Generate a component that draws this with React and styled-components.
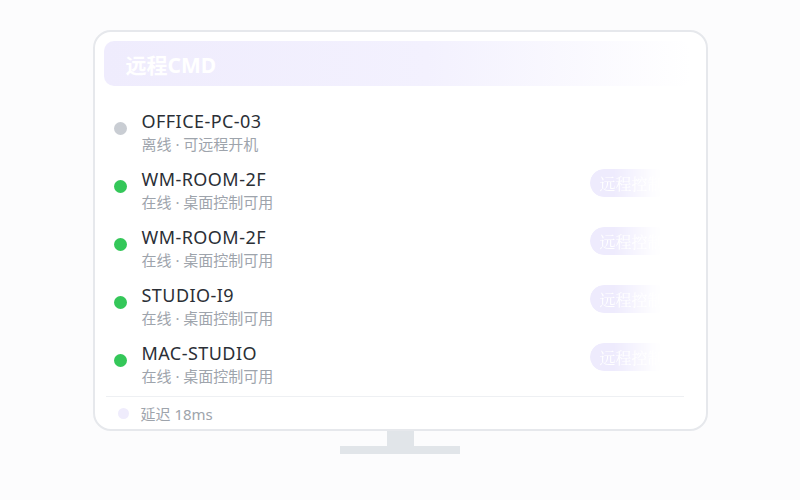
import styled, { createGlobalStyle } from "styled-components";

const GlobalStyle = createGlobalStyle`
  html, body {
    margin: 0;
    padding: 0;
    background: #fcfcfd;
    font-family: "Noto Sans", "Noto Sans CJK SC", sans-serif;
  }
`;

// 页面与显示器外框
const Page = styled.div`
  width: 800px;
  height: 500px;
  padding-top: 30px;
  box-sizing: border-box;
  display: flex;
  flex-direction: column;
  align-items: center;
`;

const Monitor = styled.div`
  width: 615px;
  height: 401px;
  box-sizing: border-box;
  border: 2px solid #e6e8ec;
  border-radius: 18px;
  background: #fff;
  padding: 9px 11px 0 9px;
  display: flex;
  flex-direction: column;
`;

const Neck = styled.div`
  width: 27px;
  height: 15px;
  background: #e1e5e9;
`;

const Base = styled.div`
  width: 120px;
  height: 8px;
  background: #e1e5e9;
`;

const Header = styled.div`
  height: 45px;
  border-radius: 10px;
  background: linear-gradient(90deg, #efecfd 0%, #f3f1fe 55%, #ffffff 100%);
  display: flex;
  align-items: center;
  padding-left: 22px;
  color: #fff;
  font-weight: 700;
  font-size: 21px;
  margin-right: 4px;
`;

const List = styled.div`
  margin-top: 17px;
  display: flex;
  flex-direction: column;
`;

const Row = styled.div`
  height: 58px;
  box-sizing: border-box;
  padding: 6px 25px 6px 10px;
  display: flex;
  align-items: flex-start;
`;

const Dot = styled.span`
  width: ${p => p.$size || 13}px;
  height: ${p => p.$size || 13}px;
  border-radius: 50%;
  flex-shrink: 0;
  background: ${p => p.$color};
  margin-top: ${p => p.$top || 0}px;
`;

const Info = styled.div`
  margin-left: 15px;
  display: flex;
  flex-direction: column;
`;

const Name = styled.div`
  font-size: 18px;
  line-height: 24px;
  color: #2b2f36;
  letter-spacing: 0.45px;
`;

const Sub = styled.div`
  font-size: 15px;
  line-height: 22px;
  color: #9ea4ac;
`;

// 右侧渐隐的远程控制按钮
const RemoteButton = styled.button`
  margin-left: auto;
  margin-top: 2px;
  width: 80px;
  height: 28px;
  border: none;
  border-radius: 14px;
  padding: 0 0 0 10px;
  text-align: left;
  background: #eeebfd;
  color: #fff;
  font-family: "Noto Serif CJK SC", "Liberation Serif", serif;
  font-size: 16px;
  white-space: nowrap;
  -webkit-mask-image: linear-gradient(90deg, #000 30%, rgba(0, 0, 0, 0.12) 78%, transparent 90%);
  mask-image: linear-gradient(90deg, #000 30%, rgba(0, 0, 0, 0.12) 78%, transparent 90%);
`;

const Divider = styled.div`
  height: 1px;
  background: #eef0f3;
  margin: 3px 11px 0 2px;
`;

const Footer = styled.div`
  flex: 1;
  display: flex;
  align-items: center;
  padding-left: 14px;
  gap: 12px;
  font-size: 15px;
  color: #9ea4ac;
`;

const devices = [
  { name: "OFFICE-PC-03", status: "离线 · 可远程开机", online: false },
  { name: "WM-ROOM-2F", status: "在线 · 桌面控制可用", online: true },
  { name: "WM-ROOM-2F", status: "在线 · 桌面控制可用", online: true },
  { name: "STUDIO-I9", status: "在线 · 桌面控制可用", online: true },
  { name: "MAC-STUDIO", status: "在线 · 桌面控制可用", online: true },
];

export default function App() {
  return (
    <>
      <GlobalStyle />
      <Page>
        <Monitor>
          <Header>远程CMD</Header>
          <List>
            {devices.map((d, i) => (
              <Row key={i}>
                <Dot $color={d.online ? "#34c759" : "#c9cdd3"} $top={13} />
                <Info>
                  <Name>{d.name}</Name>
                  <Sub>{d.status}</Sub>
                </Info>
                {d.online && <RemoteButton>远程控制</RemoteButton>}
              </Row>
            ))}
          </List>
          <Divider />
          <Footer>
            <Dot $color="#efecfc" $size={11} />
            <span>延迟 18ms</span>
          </Footer>
        </Monitor>
        <Neck />
        <Base />
      </Page>
    </>
  );
}
